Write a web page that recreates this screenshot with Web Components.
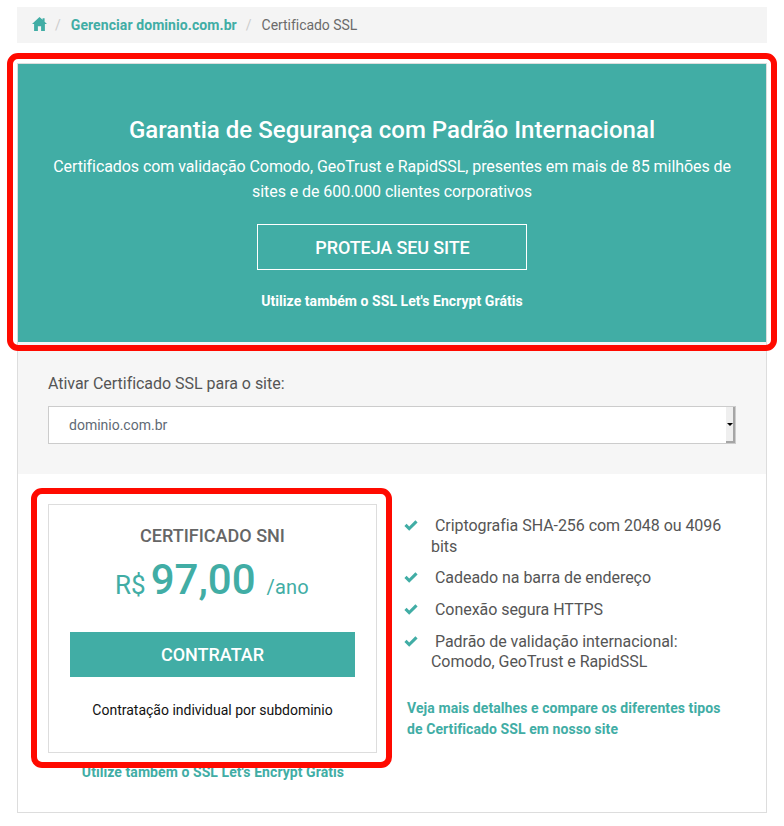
<!DOCTYPE html>
<html lang="pt-BR">
<head>
<meta charset="utf-8">
<title>Certificado SSL</title>
<style>
  html, body { margin: 0; background: #fff; }
  body { font-family: Roboto, "Liberation Sans", sans-serif; color: #555; position: relative; height: 826px; overflow: hidden; }
</style>
</head>
<body>
<ssl-page></ssl-page>
<script>
const TEAL = "#41ada5";

class SslBreadcrumb extends HTMLElement {
  constructor() {
    super();
    this.attachShadow({ mode: "open" });
    this.shadowRoot.innerHTML = `
      <style>
        :host { display: flex; align-items: center; height: 36px; background: #f4f4f4; padding-left: 15px; font-size: 14px; color: #6b6b6b; }
        svg { width: 15px; height: 14px; fill: ${TEAL}; display: block; margin-top: -2px; }
        .sep { color: #ccc; margin: 0 10px 0 8px; }
        a { color: ${TEAL}; font-weight: 700; text-decoration: none; letter-spacing: .08px; }
        .cur { letter-spacing: -.05px; }
      </style>
      <svg viewBox="0 0 15 14"><path d="M7.5 0 0 7h2.1v7h3.8V9.2h3.2V14h3.8V7H15l-2.4-2.3V1.2h-2v1.6z"/></svg>
      <span class="sep">/</span>
      <a href="#">Gerenciar dominio.com.br</a>
      <span class="sep" style="margin-left:9px">/</span>
      <span class="cur">Certificado SSL</span>`;
  }
}
customElements.define("ssl-breadcrumb", SslBreadcrumb);

class SslHero extends HTMLElement {
  constructor() {
    super();
    this.attachShadow({ mode: "open" });
    this.shadowRoot.innerHTML = `
      <style>
        :host { display: flex; flex-direction: column; align-items: center; box-sizing: border-box; height: 278px; background: ${TEAL}; color: #fff; text-align: center; padding-top: 52px; }
        h1 { margin: 0; font-size: 24px; font-weight: 500; line-height: 28px; letter-spacing: .03px; }
        p { margin: 11px 0 0; font-size: 16px; line-height: 24.5px; width: 700px; letter-spacing: -.07px; }
        .btn { display: flex; align-items: center; justify-content: center; box-sizing: border-box; width: 270px; height: 46px; margin-top: 20px; padding-left: 1px; border: 1px solid #fff; font-size: 18px; font-weight: 500; letter-spacing: -.13px; }
        small { display: block; margin-top: 22px; font-size: 14px; font-weight: 700; line-height: 18px; letter-spacing: .05px; }
      </style>
      <h1><slot name="title"></slot></h1>
      <p><slot name="text"></slot></p>
      <div class="btn"><slot name="action"></slot></div>
      <small><slot name="note"></slot></small>`;
  }
}
customElements.define("ssl-hero", SslHero);

class SslSelect extends HTMLElement {
  constructor() {
    super();
    this.attachShadow({ mode: "open" });
    this.shadowRoot.innerHTML = `
      <style>
        :host { display: block; box-sizing: border-box; height: 132px; background: #f6f6f6; padding: 32px 30px 0; }
        label { display: block; font-size: 16px; line-height: 20px; color: #555; letter-spacing: -.03px; }
        .box { display: flex; align-items: center; justify-content: space-between; box-sizing: border-box; width: 688px; height: 38px; margin-top: 12px; background: #fff; border: 1px solid #ccc; padding-left: 20px; font-size: 14px; color: #5f6a75; }
        .arrow { align-self: stretch; width: 9px; background: #efefef; border-right: 2px solid #a5a5a5; border-bottom: 2px solid #a5a5a5; box-sizing: border-box; display: flex; align-items: center; justify-content: center; }
        .arrow i { display: block; width: 0; height: 0; border: 3px solid transparent; border-top: 3px solid #000; border-bottom: 0; margin-top: 1px; }
      </style>
      <label><slot name="label"></slot></label>
      <div class="box"><span><slot></slot></span><span class="arrow"><i></i></span></div>`;
  }
}
customElements.define("ssl-select", SslSelect);

class SslPlan extends HTMLElement {
  constructor() {
    super();
    this.attachShadow({ mode: "open" });
    this.shadowRoot.innerHTML = `
      <style>
        :host { display: flex; flex-direction: column; align-items: center; box-sizing: border-box; width: 329px; height: 249px; background: #fff; border: 1px solid #ddd; padding: 21px 21px 0; }
        h2 { margin: 0; font-size: 18px; line-height: 20px; font-weight: 500; color: #666; }
        .price { display: flex; align-items: baseline; margin: 8px 1px 0 0; color: ${TEAL}; font-size: 26px; line-height: 52px; }
        .price b { font-size: 42px; font-weight: 500; margin: 0 11px 0 5px; }
        .price span { font-size: 20px; letter-spacing: .2px; }
        .btn { display: flex; align-items: center; justify-content: center; align-self: stretch; height: 45px; margin-top: 19px; background: ${TEAL}; color: #fff; font-size: 18px; font-weight: 500; }
        p { margin: 24px 0 0; font-size: 14px; line-height: 18px; color: #111; }
      </style>
      <h2><slot name="title"></slot></h2>
      <div class="price">R$<b><slot name="value"></slot></b><span><slot name="period"></slot></span></div>
      <div class="btn"><slot name="action"></slot></div>
      <p><slot name="note"></slot></p>`;
  }
}
customElements.define("ssl-plan", SslPlan);

class SslCheck extends HTMLElement {
  constructor() {
    super();
    this.attachShadow({ mode: "open" });
    this.shadowRoot.innerHTML = `
      <style>
        :host { display: block; padding-left: 26px; text-indent: -26px; font-size: 16px; line-height: 20.8px; color: #555; letter-spacing: -.05px; }
        svg { width: 14px; height: 11px; fill: ${TEAL}; margin: 0 17px 0 -1px; }
      </style>
      <svg viewBox="0 0 14 11"><path d="M5.2 10.8.4 6 2.6 3.8 5.2 6.4 11.4.2 13.6 2.4z"/></svg><slot></slot>`;
  }
}
customElements.define("ssl-check", SslCheck);

class SslMark extends HTMLElement {
  constructor() {
    super();
    this.attachShadow({ mode: "open" });
    this.shadowRoot.innerHTML = `
      <style>
        :host { position: absolute; box-sizing: border-box; border: 6px solid #ff0a00; border-radius: 11px; pointer-events: none; }
      </style>`;
  }
}
customElements.define("ssl-mark", SslMark);

class SslPage extends HTMLElement {
  constructor() {
    super();
    this.attachShadow({ mode: "open" });
    this.shadowRoot.innerHTML = `
      <style>
        :host { display: block; padding: 7px 17px 0; }
        .panel { box-sizing: border-box; height: 750px; margin-top: 20px; border: 1px solid #ddd; }
        .bottom { display: flex; padding: 30px 0 0 30px; }
        .left { width: 329px; flex: none; }
        .free { display: block; margin-top: 10px; padding-left: 1px; text-align: center; font-size: 14px; line-height: 18px; font-weight: 700; color: ${TEAL}; letter-spacing: .07px; }
        .right { width: 322px; margin-left: 28px; padding-top: 12px; }
        ssl-check { margin-bottom: 10.8px; }
        .more { display: block; margin-top: 25px; padding-left: 2px; font-size: 14px; line-height: 21px; font-weight: 700; color: ${TEAL}; letter-spacing: .08px; }
      </style>
      <ssl-breadcrumb></ssl-breadcrumb>
      <div class="panel">
        <ssl-hero>
          <span slot="title">Garantia de Segurança com Padrão Internacional</span>
          <span slot="text">Certificados com validação Comodo, GeoTrust e RapidSSL, presentes em mais de 85 milhões de sites e de 600.000 clientes corporativos</span>
          <span slot="action">PROTEJA SEU SITE</span>
          <span slot="note">Utilize também o SSL Let's Encrypt Grátis</span>
        </ssl-hero>
        <ssl-select>
          <span slot="label">Ativar Certificado SSL para o site:</span>
          dominio.com.br
        </ssl-select>
        <div class="bottom">
          <div class="left">
            <ssl-plan>
              <span slot="title">CERTIFICADO SNI</span>
              <span slot="value">97,00</span>
              <span slot="period">/ano</span>
              <span slot="action">CONTRATAR</span>
              <span slot="note">Contratação individual por subdominio</span>
            </ssl-plan>
            <span class="free">Utilize também o SSL Let's Encrypt Grátis</span>
          </div>
          <div class="right">
            <ssl-check>Criptografia SHA-256 com 2048 ou 4096 bits</ssl-check>
            <ssl-check>Cadeado na barra de endereço</ssl-check>
            <ssl-check>Conexão segura HTTPS</ssl-check>
            <ssl-check>Padrão de validação internacional: Comodo, GeoTrust e RapidSSL</ssl-check>
            <span class="more">Veja mais detalhes e compare os diferentes tipos de Certificado SSL em nosso site</span>
          </div>
        </div>
      </div>
      <ssl-mark style="left:7px;top:53px;width:770px;height:298px"></ssl-mark>
      <ssl-mark style="left:31px;top:488px;width:361px;height:280px"></ssl-mark>`;
  }
}
customElements.define("ssl-page", SslPage);
</script>
</body>
</html>
